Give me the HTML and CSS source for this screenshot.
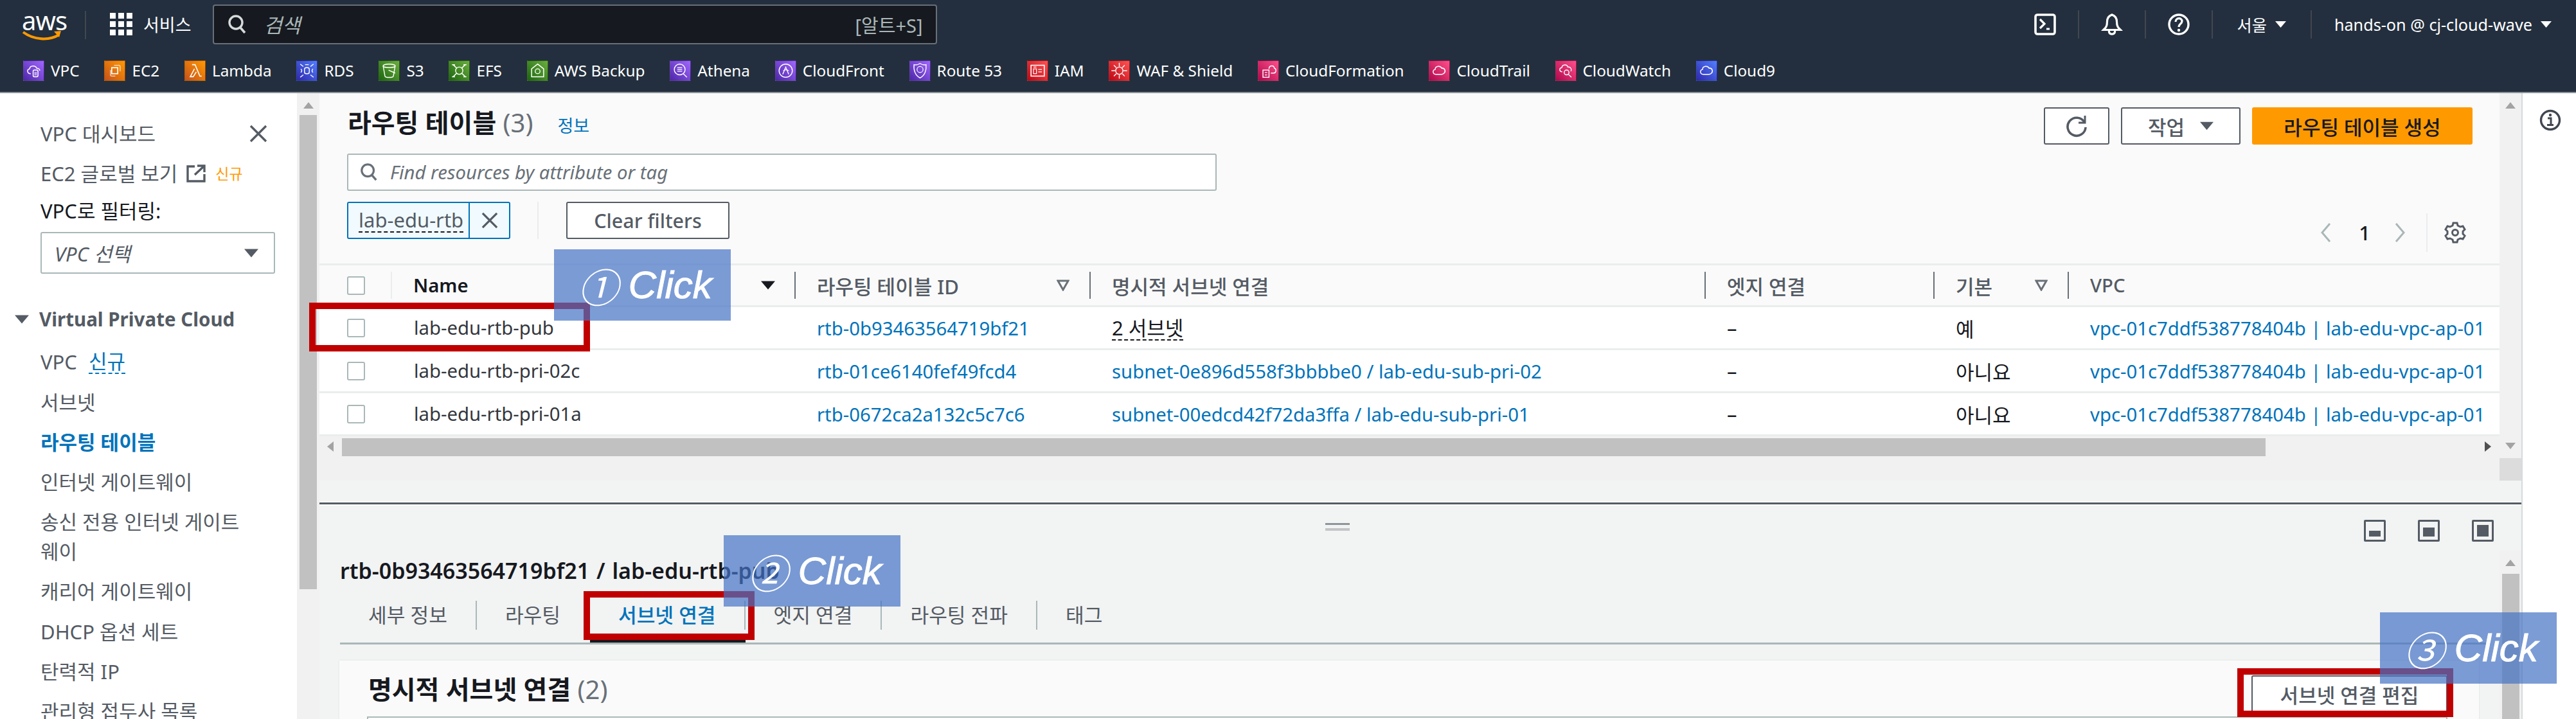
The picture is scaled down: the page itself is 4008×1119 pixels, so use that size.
FILE: index.html
```html
<!DOCTYPE html>
<html lang="ko">

<head>
    <meta charset="UTF-8">
    <title>라우팅 테이블 | VPC Management Console</title>
    <link rel="stylesheet" href="styles.css">
</head>

<body>
    <svg class="sprite" xmlns="http://www.w3.org/2000/svg">
        <symbol id="i-search" viewBox="0 0 32 32"><circle cx="14" cy="13" r="10" fill="none" stroke="currentColor" stroke-width="3.4"/><path d="M21 21l7 8" stroke="currentColor" stroke-width="3.6" fill="none"/></symbol>
        <symbol id="i-x" viewBox="0 0 28 28"><path d="M2 2l24 24M26 2L2 26" stroke="currentColor" stroke-width="3.4" fill="none"/></symbol>
        <symbol id="i-tri" viewBox="0 0 20 12"><path d="M0 0h20L10 12z" fill="currentColor"/></symbol>
        <symbol id="i-filter" viewBox="0 0 20 18"><path d="M2 2h16L10 16z" fill="none" stroke="currentColor" stroke-width="3"/></symbol>
        <symbol id="i-ext" viewBox="0 0 30 28"><path d="M13 3H2v23h26V15M17 2h11v10M28 2L13 16" fill="none" stroke="currentColor" stroke-width="3.4"/></symbol>
        <symbol id="i-shell" viewBox="0 0 34 34"><rect x="2" y="2" width="30" height="30" rx="3" fill="none" stroke="currentColor" stroke-width="3.6"/><path d="M9 9l7 7-7 7M19 24h5" fill="none" stroke="currentColor" stroke-width="3.2"/></symbol>
        <symbol id="i-bell" viewBox="0 0 36 36"><path d="M18 2c-6 2-8 6-8 12 0 7-2 9-6 13h28c-4-4-6-6-6-13 0-6-2-10-8-12zM13 28c0 4 2 6 5 6s5-2 5-6" fill="none" stroke="currentColor" stroke-width="3.4"/></symbol>
        <symbol id="i-help" viewBox="0 0 34 34"><circle cx="17" cy="17" r="15" fill="none" stroke="currentColor" stroke-width="3.4"/><path d="M12 13c0-7 10-7 10-1 0 4-5 4-5 9" fill="none" stroke="currentColor" stroke-width="3.2"/><circle cx="17" cy="26" r="2.2" fill="currentColor"/></symbol>
        <symbol id="i-info" viewBox="0 0 34 34"><circle cx="17" cy="17" r="14.5" fill="none" stroke="currentColor" stroke-width="3.4"/><path d="M13 14h5v10M12 24.5h10" fill="none" stroke="currentColor" stroke-width="3"/><circle cx="17" cy="9" r="2.2" fill="currentColor"/></symbol>
        <symbol id="i-refresh" viewBox="0 0 36 36"><path d="M30 12A14 14 0 1 0 32 20" fill="none" stroke="currentColor" stroke-width="3.6"/><path d="M31 2v11H21" fill="none" stroke="currentColor" stroke-width="3"/></symbol>
        <symbol id="i-gear" viewBox="0 0 34 34"><path d="M14 2h6l1 4 4 2 4-1 3 5-3 3v4l3 3-3 5-4-1-4 2-1 4h-6l-1-4-4-2-4 1-3-5 3-3v-4L2 12l3-5 4 1 4-2z" fill="none" stroke="currentColor" stroke-width="3"/><circle cx="17" cy="17" r="4.5" fill="none" stroke="currentColor" stroke-width="3"/></symbol>
        <symbol id="i-left" viewBox="0 0 20 32"><path d="M16 2L4 16l12 14" fill="none" stroke="currentColor" stroke-width="3"/></symbol>
        <symbol id="i-right" viewBox="0 0 20 32"><path d="M4 2l12 14L4 30" fill="none" stroke="currentColor" stroke-width="3"/></symbol>
        <symbol id="f-cloud" viewBox="0 0 32 32"><path d="M10 22c-5 0-6-7-1-8 0-6 9-7 11-2 5-1 7 5 4 8-1 1-2 2-4 2z" fill="none" stroke="currentColor" stroke-width="1.6"/></symbol>
        <symbol id="f-vpc" viewBox="0 0 32 32"><path d="M11 21c-6 0-7-7-2-8 1-6 10-6 12-1 3 0 5 2 5 4" fill="none" stroke="currentColor" stroke-width="1.6"/><rect x="15" y="15" width="8" height="11" rx="2" fill="none" stroke="currentColor" stroke-width="1.6"/><path d="M18 18v6M20 18v6" stroke="currentColor" stroke-width="1"/></symbol>
        <symbol id="f-ec2" viewBox="0 0 32 32"><rect x="11" y="11" width="10" height="10" fill="none" stroke="currentColor" stroke-width="1.8"/><path d="M15 7h8a2 2 0 0 1 2 2v8M9 15v8a2 2 0 0 0 2 2h6" fill="none" stroke="currentColor" stroke-width="1.4" opacity=".75"/></symbol>
        <symbol id="f-lambda" viewBox="0 0 32 32"><path d="M11 6h5l8 19h3M15 13L8 26h5l5-8" fill="none" stroke="currentColor" stroke-width="1.7"/></symbol>
        <symbol id="f-rds" viewBox="0 0 32 32"><rect x="12" y="11" width="8" height="10" rx="3" fill="none" stroke="currentColor" stroke-width="1.5"/><path d="M5 5l5 4M27 5l-5 4M5 27l5-4M27 27l-5-4M6 13c2 2 2 4 0 6M26 13c-2 2-2 4 0 6M13 6h6" fill="none" stroke="currentColor" stroke-width="1.5"/></symbol>
        <symbol id="f-s3" viewBox="0 0 32 32"><ellipse cx="16" cy="8" rx="10" ry="3" fill="none" stroke="currentColor" stroke-width="1.5"/><path d="M6 8l3 17c1 3 13 3 14 0l3-17M15 15l11 5" fill="none" stroke="currentColor" stroke-width="1.5"/></symbol>
        <symbol id="f-efs" viewBox="0 0 32 32"><path d="M6 6l6 6M26 6l-6 6M6 26l6-6M26 26l-6-6M4 6h5M23 6h5M4 26h5M23 26h5" stroke="currentColor" stroke-width="1.6" fill="none"/><ellipse cx="16" cy="16" rx="6" ry="6" fill="none" stroke="currentColor" stroke-width="1.5"/></symbol>
        <symbol id="f-backup" viewBox="0 0 32 32"><path d="M16 5l10 8v13H6V13z" fill="none" stroke="currentColor" stroke-width="1.6"/><circle cx="16" cy="17" r="4" fill="none" stroke="currentColor" stroke-width="1.4"/></symbol>
        <symbol id="f-athena" viewBox="0 0 32 32"><circle cx="15" cy="14" r="9" fill="none" stroke="currentColor" stroke-width="1.5"/><path d="M21 21l6 6M11 11h8M11 14h8M11 17h8" stroke="currentColor" stroke-width="1.4" fill="none"/></symbol>
        <symbol id="f-front" viewBox="0 0 32 32"><circle cx="16" cy="16" r="11" fill="none" stroke="currentColor" stroke-width="1.5"/><path d="M11 22l5-12 5 12M12 16c3-2 6-2 9 0" fill="none" stroke="currentColor" stroke-width="1.4"/></symbol>
        <symbol id="f-route" viewBox="0 0 32 32"><path d="M16 4c3 2 7 3 10 2 1 9-2 18-10 22C8 24 5 15 6 6c3 1 7 0 10-2z" fill="none" stroke="currentColor" stroke-width="1.5"/><circle cx="16" cy="14" r="5" fill="none" stroke="currentColor" stroke-width="1.3"/></symbol>
        <symbol id="f-iam" viewBox="0 0 32 32"><rect x="5" y="7" width="22" height="18" fill="none" stroke="currentColor" stroke-width="1.7"/><rect x="9" y="13" width="5" height="8" fill="none" stroke="currentColor" stroke-width="1.3"/><path d="M17 14h6M17 18h6M9 10h5" stroke="currentColor" stroke-width="1.3"/></symbol>
        <symbol id="f-waf" viewBox="0 0 32 32"><circle cx="16" cy="16" r="6" fill="none" stroke="currentColor" stroke-width="1.5"/><path d="M16 3v6M16 23v6M3 16h6M23 16h6M7 7l4 4M25 7l-4 4M7 25l4-4M25 25l-4-4" stroke="currentColor" stroke-width="1.5"/></symbol>
        <symbol id="f-form" viewBox="0 0 32 32"><path d="M17 13c0-6 8-7 9-1 4 1 3 8-1 8h-5" fill="none" stroke="currentColor" stroke-width="1.5"/><rect x="7" y="15" width="10" height="12" fill="none" stroke="currentColor" stroke-width="1.5"/><path d="M10 19h4M10 23h4" stroke="currentColor" stroke-width="1.3"/></symbol>
        <symbol id="f-watch" viewBox="0 0 32 32"><path d="M10 18c-5 0-6-6-1-7 1-6 9-6 10-1 5-1 7 4 5 7" fill="none" stroke="currentColor" stroke-width="1.5"/><circle cx="17" cy="19" r="4" fill="none" stroke="currentColor" stroke-width="1.5"/><path d="M20 22l5 5" stroke="currentColor" stroke-width="1.5"/></symbol>
    </svg>

    <header class="top">
        <div class="nav">
            <div class="logo">
                <span class="logo-text">aws</span>
                <svg class="logo-smile" viewBox="0 0 64 18"><path d="M2 3c16 12 40 14 56 4" fill="none" stroke="#ff9900" stroke-width="4"/><path d="M50 2l11-1-3 10z" fill="#ff9900"/></svg>
            </div>
            <div class="services">
                <span class="grid-icon"><i></i><i></i><i></i><i></i><i></i><i></i><i></i><i></i><i></i></span>
                <span>서비스</span>
            </div>
            <div class="search">
                <svg class="search-icon"><use href="#i-search"/></svg>
                <span class="search-hint">검색</span>
                <span class="search-key">[알트+S]</span>
            </div>
            <div class="nav-right">
                <div class="nav-item"><svg class="nav-icon"><use href="#i-shell"/></svg></div>
                <div class="nav-item"><svg class="nav-icon"><use href="#i-bell"/></svg></div>
                <div class="nav-item"><svg class="nav-icon"><use href="#i-help"/></svg></div>
                <div class="nav-item nav-region">서울<svg class="nav-caret"><use href="#i-tri"/></svg></div>
                <div class="nav-item">hands-on @ cj-cloud-wave<svg class="nav-caret"><use href="#i-tri"/></svg></div>
            </div>
        </div>
        <div class="favs">
            <div class="fav"><span class="fav-icon purple"><svg><use href="#f-vpc"/></svg></span>VPC</div>
            <div class="fav"><span class="fav-icon orange"><svg><use href="#f-ec2"/></svg></span>EC2</div>
            <div class="fav"><span class="fav-icon orange"><svg><use href="#f-lambda"/></svg></span>Lambda</div>
            <div class="fav"><span class="fav-icon blue"><svg><use href="#f-rds"/></svg></span>RDS</div>
            <div class="fav"><span class="fav-icon green"><svg><use href="#f-s3"/></svg></span>S3</div>
            <div class="fav"><span class="fav-icon green"><svg><use href="#f-efs"/></svg></span>EFS</div>
            <div class="fav"><span class="fav-icon green"><svg><use href="#f-backup"/></svg></span>AWS Backup</div>
            <div class="fav"><span class="fav-icon purple"><svg><use href="#f-athena"/></svg></span>Athena</div>
            <div class="fav"><span class="fav-icon purple"><svg><use href="#f-front"/></svg></span>CloudFront</div>
            <div class="fav"><span class="fav-icon purple"><svg><use href="#f-route"/></svg></span>Route 53</div>
            <div class="fav"><span class="fav-icon red"><svg><use href="#f-iam"/></svg></span>IAM</div>
            <div class="fav"><span class="fav-icon red"><svg><use href="#f-waf"/></svg></span>WAF &amp; Shield</div>
            <div class="fav"><span class="fav-icon pink"><svg><use href="#f-form"/></svg></span>CloudFormation</div>
            <div class="fav"><span class="fav-icon pink"><svg><use href="#f-cloud"/></svg></span>CloudTrail</div>
            <div class="fav"><span class="fav-icon pink"><svg><use href="#f-watch"/></svg></span>CloudWatch</div>
            <div class="fav"><span class="fav-icon blue"><svg><use href="#f-cloud"/></svg></span>Cloud9</div>
        </div>
    </header>

    <div class="page">
        <aside class="side">
            <div class="side-body">
                <div class="side-row side-first">VPC 대시보드<svg class="side-close"><use href="#i-x"/></svg></div>
                <div class="side-row">EC2 글로벌 보기<svg class="side-ext"><use href="#i-ext"/></svg><span class="new-orange">신규</span></div>
                <div class="side-label">VPC로 필터링:</div>
                <div class="side-select"><span>VPC 선택</span><svg class="select-tri"><use href="#i-tri"/></svg></div>
                <div class="side-group"><svg class="group-tri"><use href="#i-tri"/></svg>Virtual Private Cloud</div>
                <div class="side-row">VPC<span class="new-blue">신규</span></div>
                <div class="side-row">서브넷</div>
                <div class="side-row active">라우팅 테이블</div>
                <div class="side-row">인터넷 게이트웨이</div>
                <div class="side-row">송신 전용 인터넷 게이트<br>웨이</div>
                <div class="side-row">캐리어 게이트웨이</div>
                <div class="side-row">DHCP 옵션 세트</div>
                <div class="side-row">탄력적 IP</div>
                <div class="side-row">관리형 접두사 목록</div>
            </div>
            <div class="side-scroll">
                <span class="arrow-up"></span>
                <div class="side-thumb"></div>
            </div>
        </aside>

        <main class="content">
            <section class="upper">
                <div class="upper-main">
                    <div class="list-head">
                        <div class="title-row">
                            <h1 class="list-title">라우팅 테이블 <span class="count">(3)</span><span class="info-link">정보</span></h1>
                            <div class="actions">
                                <button class="btn btn-icon"><svg><use href="#i-refresh"/></svg></button>
                                <button class="btn btn-menu">작업<svg class="btn-caret"><use href="#i-tri"/></svg></button>
                                <button class="btn btn-primary">라우팅 테이블 생성</button>
                            </div>
                        </div>
                        <div class="find">
                            <svg class="find-icon"><use href="#i-search"/></svg>
                            <span>Find resources by attribute or tag</span>
                        </div>
                        <div class="filter-row">
                            <div class="filter-left">
                                <div class="token"><span class="token-text"><span class="dotted">lab-edu-rtb</span></span><span class="token-x"><svg><use href="#i-x"/></svg></span></div>
                                <div class="filter-sep"></div>
                                <button class="btn btn-clear">Clear filters</button>
                            </div>
                            <div class="pager">
                                <svg class="pager-arrow"><use href="#i-left"/></svg>
                                <span class="pager-num">1</span>
                                <svg class="pager-arrow"><use href="#i-right"/></svg>
                                <span class="pager-gear"><svg><use href="#i-gear"/></svg></span>
                            </div>
                        </div>
                    </div>

                    <table class="rt-table">
                        <colgroup>
                            <col class="c-check"><col class="c-name"><col class="c-id"><col class="c-sub"><col class="c-edge"><col class="c-def"><col class="c-vpc">
                        </colgroup>
                        <tr>
                            <th><span class="check"></span></th>
                            <th><div class="th-in th-first"><span class="th-dark">Name</span><svg class="sort-tri"><use href="#i-tri"/></svg></div></th>
                            <th><div class="th-in"><span>라우팅 테이블 ID</span><svg class="filter-tri"><use href="#i-filter"/></svg></div></th>
                            <th><div class="th-in"><span>명시적 서브넷 연결</span></div></th>
                            <th><div class="th-in"><span>엣지 연결</span></div></th>
                            <th><div class="th-in"><span>기본</span><svg class="filter-tri"><use href="#i-filter"/></svg></div></th>
                            <th><div class="th-in"><span class="th-latin">VPC</span></div></th>
                        </tr>
                        <tr>
                            <td><span class="check"></span></td>
                            <td class="cell-name">lab-edu-rtb-pub</td>
                            <td><a>rtb-0b93463564719bf21</a></td>
                            <td><span class="dotted">2 서브넷</span></td>
                            <td>–</td>
                            <td>예</td>
                            <td><a>vpc-01c7ddf538778404b | lab-edu-vpc-ap-01</a></td>
                        </tr>
                        <tr>
                            <td><span class="check"></span></td>
                            <td class="cell-name">lab-edu-rtb-pri-02c</td>
                            <td><a>rtb-01ce6140fef49fcd4</a></td>
                            <td><a>subnet-0e896d558f3bbbbe0 / lab-edu-sub-pri-02</a></td>
                            <td>–</td>
                            <td>아니요</td>
                            <td><a>vpc-01c7ddf538778404b | lab-edu-vpc-ap-01</a></td>
                        </tr>
                        <tr>
                            <td><span class="check"></span></td>
                            <td class="cell-name">lab-edu-rtb-pri-01a</td>
                            <td><a>rtb-0672ca2a132c5c7c6</a></td>
                            <td><a>subnet-00edcd42f72da3ffa / lab-edu-sub-pri-01</a></td>
                            <td>–</td>
                            <td>아니요</td>
                            <td><a>vpc-01c7ddf538778404b | lab-edu-vpc-ap-01</a></td>
                        </tr>
                    </table>

                    <div class="hscroll">
                        <span class="arrow-left"></span>
                        <div class="hscroll-thumb"></div>
                        <span class="arrow-right"></span>
                    </div>
                </div>
                <div class="upper-scroll">
                    <div class="upper-track">
                        <span class="arrow-up"></span>
                        <span class="arrow-down"></span>
                    </div>
                    <div class="upper-corner"></div>
                </div>
            </section>

            <section class="split">
                <div class="split-line"></div>
                <div class="split-tools">
                    <div class="handle"><i></i><i></i></div>
                    <div class="panes">
                        <span class="pane pane-low"><i></i></span>
                        <span class="pane pane-mid"><i></i></span>
                        <span class="pane pane-full"><i></i></span>
                    </div>
                </div>
                <div class="split-body">
                    <div class="detail">
                        <h2 class="detail-title">rtb-0b93463564719bf21 / lab-edu-rtb-pub</h2>
                        <div class="tabs">
                            <div class="tab"><span>세부 정보</span></div>
                            <div class="tab"><span>라우팅</span></div>
                            <div class="tab tab-on"><span>서브넷 연결</span></div>
                            <div class="tab"><span>엣지 연결</span></div>
                            <div class="tab"><span>라우팅 전파</span></div>
                            <div class="tab tab-last"><span>태그</span></div>
                        </div>
                        <div class="card">
                            <div class="card-head">
                                <h3 class="card-title">명시적 서브넷 연결 <span class="count">(2)</span></h3>
                                <button class="btn btn-edit">서브넷 연결 편집</button>
                            </div>
                            <div class="card-input"></div>
                        </div>
                    </div>
                    <div class="detail-scroll">
                        <span class="arrow-up"></span>
                        <div class="detail-thumb"></div>
                    </div>
                </div>
            </section>
        </main>

        <aside class="tools">
            <svg class="tools-info"><use href="#i-info"/></svg>
        </aside>
    </div>

    <!-- annotations pasted over the screenshot -->
    <div class="red-box red-1"></div>
    <div class="red-box red-2"></div>
    <div class="red-box red-3"></div>
    <div class="click click-1"><span class="click-num">①</span> Click</div>
    <div class="click click-2"><span class="click-num">②</span> Click</div>
    <div class="click click-3"><span class="click-num">③</span> Click</div>
</body>

</html>
```

FILE: styles.css
```css
* {
    box-sizing: border-box;
}
html, body {
    width: 4008px;
    height: 1119px;
    margin: 0;
    overflow: hidden;
}
body {
    position: relative;
    font-family: "Noto Sans", "Noto Sans CJK KR", sans-serif;
    font-size: 31px;
    color: #16191f;
    background: #fff;
}
.sprite {
    display: none;
}
h1, h2, h3 {
    margin: 0;
}
button {
    font-family: inherit;
}

/* top bars */
.top {
    height: 145px;
    background: #232f3e;
    border-bottom: 2px solid #8d9499;
    color: #fff;
}
.nav {
    display: flex;
    align-items: center;
    height: 75px;
    font-size: 25.2px;
}
.logo {
    position: relative;
    width: 134px;
    height: 44px;
    margin-top: 2px;
    padding-left: 34px;
    border-right: 2px solid #414750;
}
.logo-text {
    display: block;
    font-size: 40px;
    line-height: 30px;
    letter-spacing: -1px;
}
.logo-smile {
    display: block;
    width: 64px;
    height: 18px;
    margin-left: 0;
}
.services {
    display: flex;
    align-items: center;
    gap: 17px;
    padding-left: 37px;
    font-size: 27px;
}
.grid-icon {
    display: grid;
    grid-template-columns: repeat(3, 9px);
    gap: 4px;
}
.grid-icon i {
    width: 9px;
    height: 9px;
    background: #fff;
}
.search {
    display: flex;
    align-items: center;
    width: 1127px;
    height: 62px;
    margin-left: 33px;
    padding: 0 20px 0 20px;
    background: #16191f;
    border: 2px solid #687078;
    border-radius: 4px;
    color: #aab7b8;
}
.search-icon {
    width: 32px;
    height: 32px;
    color: #d5dbdb;
}
.search-hint {
    margin-left: 26px;
    font-size: 31px;
    font-style: italic;
}
.search-key {
    margin-left: auto;
    font-size: 29px;
}
.nav-right {
    display: flex;
    align-items: center;
    margin-left: auto;
}
.nav-item {
    display: flex;
    align-items: center;
    height: 44px;
    padding: 0 34px;
    border-right: 2px solid #414750;
}
.nav-region {
    padding: 0 38px;
}
.nav-item:last-child {
    padding: 0 38px 0 35px;
    border-right: 0;
}
.nav-icon {
    width: 34px;
    height: 34px;
}
.nav-caret {
    width: 17px;
    height: 12px;
    margin-left: 13px;
}
.favs {
    display: flex;
    align-items: center;
    gap: 38.8px;
    height: 68px;
    padding: 1px 0 0 36px;
    font-size: 24.3px;
}
.fav {
    display: flex;
    align-items: center;
    gap: 10px;
}
.fav-icon {
    display: flex;
    width: 33px;
    height: 32px;
    border: 1px solid rgba(0, 0, 0, .25);
}
.fav-icon svg {
    width: 31px;
    height: 30px;
    color: #fff;
}
.purple { background: linear-gradient(45deg, #4d27a8, #a166ff); }
.orange { background: linear-gradient(45deg, #c8511b, #ff9900); }
.blue { background: linear-gradient(45deg, #2e27ad, #527fff); }
.green { background: linear-gradient(45deg, #1b660f, #6cae3e); }
.red { background: linear-gradient(45deg, #bd0816, #ff5252); }
.pink { background: linear-gradient(45deg, #b0084d, #ff4f8b); }

/* page columns */
.page {
    display: flex;
    height: 974px;
}

/* left nav */
.side {
    display: flex;
    flex: none;
    width: 497px;
    color: #545b64;
}
.side-body {
    width: 462px;
    padding: 40px 0 0 63px;
    overflow: hidden;
}
.side-row {
    display: flex;
    flex-wrap: wrap;
    align-items: center;
    width: 380px;
    padding: 8.1px 0;
    line-height: 46px;
    white-space: nowrap;
}
.side-first {
    position: relative;
    padding-top: 0;
}
.side-close {
    position: absolute;
    left: 325px;
    top: 9px;
    width: 28px;
    height: 28px;
}
.side-ext {
    width: 30px;
    height: 28px;
    margin-left: 14px;
}
.new-orange {
    margin-left: 15px;
    font-size: 23px;
    color: #ff9900;
}
.new-blue {
    margin-left: 18px;
    color: #0073bb;
    border-bottom: 2px dashed #0073bb;
    line-height: 36px;
}
.side-label {
    margin-top: 4px;
    color: #16191f;
    line-height: 46px;
}
.side-select {
    display: flex;
    align-items: center;
    justify-content: space-between;
    width: 365px;
    height: 65px;
    margin-top: 10px;
    padding: 0 24px 0 20px;
    background: #fff;
    border: 2px solid #aab7b8;
    border-radius: 3px;
    font-style: italic;
}
.select-tri {
    width: 22px;
    height: 14px;
}
.side-group {
    display: flex;
    align-items: center;
    margin: 48px 0 0 -40px;
    font-size: 29.5px;
    line-height: 46px;
    font-weight: 700;
    white-space: nowrap;
}
.group-tri {
    width: 22px;
    height: 14px;
    margin-right: 16px;
}
.side-group + .side-row {
    margin-top: 12px;
}
.active {
    font-weight: 700;
    color: #0073bb;
}
.side-scroll {
    position: relative;
    width: 35px;
    background: #f1f1f1;
}
.side-thumb {
    width: 27px;
    height: 738px;
    margin: 34px 0 0 4px;
    background: #c1c1c1;
}
.arrow-up, .arrow-down {
    display: block;
    position: absolute;
    left: 50%;
    width: 0;
    height: 0;
    margin-left: -8px;
    border-left: 8px solid transparent;
    border-right: 8px solid transparent;
}
.arrow-up {
    top: 14px;
    border-bottom: 10px solid #a3a3a3;
}
.arrow-down {
    bottom: 14px;
    border-top: 10px solid #a3a3a3;
}

/* main column */
.content {
    display: flex;
    flex-direction: column;
    width: 3426px;
    background: #f2f3f3;
    overflow: hidden;
}
.upper {
    display: flex;
    flex: none;
    height: 603px;
}
.upper-main {
    width: 3392px;
    background: #f1f1f1;
}
.list-head {
    height: 265px;
    padding: 22px 42px 0 44px;
    background: #fafafa;
}
.title-row {
    display: flex;
    justify-content: space-between;
    height: 58px;
}
.list-title {
    font-size: 40px;
    line-height: 48px;
    font-weight: 700;
}
.count {
    font-weight: 400;
    color: #687078;
}
.info-link {
    margin-left: 38px;
    font-size: 27px;
    font-weight: 400;
    color: #0073bb;
}
.actions {
    display: flex;
    gap: 18px;
}
.btn {
    height: 58px;
    background: #fff;
    border: 2px solid #545b64;
    border-radius: 3px;
    color: #545b64;
    font-size: 31px;
    font-weight: 500;
}
.btn-icon {
    width: 102px;
}
.btn-icon svg {
    display: block;
    width: 36px;
    height: 36px;
    margin: 0 auto;
}
.btn-menu {
    display: flex;
    align-items: center;
    justify-content: center;
    width: 186px;
}
.btn-caret {
    width: 21px;
    height: 28px;
    margin-left: 24px;
}
.btn-primary {
    width: 343px;
    background: #ff9900;
    border-color: #ff9900;
    color: #16191f;
}
.find {
    display: flex;
    align-items: center;
    gap: 18px;
    width: 1353px;
    height: 58px;
    margin: 14px 0 17px -1px;
    padding-left: 17px;
    background: #fff;
    border: 2px solid #aab7b8;
    border-radius: 3px;
    color: #687078;
    font-size: 29.3px;
    font-style: italic;
}
.find-icon {
    width: 30px;
    height: 32px;
}
.filter-row {
    display: flex;
    justify-content: space-between;
    height: 78px;
}
.filter-left {
    display: flex;
    margin-left: -1px;
}
.token {
    display: flex;
    height: 58px;
    background: #f1faff;
    border: 2px solid #0073bb;
    border-radius: 3px;
}
.token-text {
    display: flex;
    align-items: center;
    width: 189px;
    padding-left: 16px;
    border-right: 2px solid #0073bb;
}
.dotted {
    border-bottom: 2px dashed #16191f;
    line-height: 36px;
    display: inline-block;
}
.token-text .dotted {
    color: #545b64;
}
.token-x {
    display: flex;
    align-items: center;
    justify-content: center;
    width: 61px;
    color: #545b64;
}
.token-x svg {
    width: 26px;
    height: 28px;
}
.filter-sep {
    width: 2px;
    height: 58px;
    margin: 0 43px 0 42px;
    background: #eaeded;
}
.btn-clear {
    width: 254px;
    font-size: 30.5px;
    font-weight: 500;
}
.pager {
    display: flex;
    align-items: center;
    color: #aab7b8;
    align-self: flex-end;
    height: 60px;
}
.pager-arrow {
    width: 20px;
    height: 32px;
}
.pager-num {
    margin: 0 36px 0 41px;
    color: #16191f;
    font-weight: 500;
}
.pager-gear {
    display: flex;
    align-items: center;
    height: 60px;
    margin-left: 31px;
    padding: 0 10px 0 26px;
    border-left: 2px solid #eaeded;
    color: #545b64;
}
.pager-gear svg {
    width: 34px;
    height: 34px;
}

/* route table */
.rt-table {
    width: 3392px;
    table-layout: fixed;
    border-collapse: collapse;
    background: #fff;
}
.c-check { width: 111px; }
.c-name { width: 628px; }
.c-id { width: 459px; }
.c-sub { width: 957px; }
.c-edge { width: 356px; }
.c-def { width: 209px; }
.c-vpc { width: 672px; }
.rt-table th {
    height: 65px;
    padding: 0;
    background: #fafafa;
    border-top: 3px solid #eaeded;
    border-bottom: 3px solid #eaeded;
    text-align: left;
    font-weight: 500;
    color: #545b64;
}
.rt-table td {
    height: 67px;
    padding: 0 0 0 35px;
    border-bottom: 3px solid #eaeded;
    white-space: nowrap;
}
.rt-table td:first-child, .rt-table th:first-child {
    padding-left: 43px;
}
.rt-table a {
    color: #0073bb;
    font-size: 29.3px;
}
.rt-table .cell-name {
    padding-left: 36px;
    color: #33373d;
    font-size: 29.3px;
}
.check {
    display: block;
    width: 28px;
    height: 29px;
    background: #fff;
    border: 2px solid #aab7b8;
    border-radius: 3px;
}
.th-in {
    display: flex;
    align-items: center;
    justify-content: space-between;
    height: 42px;
    padding: 0 31px 0 33px;
    border-left: 2px solid #687078;
}
.th-first {
    border-left-color: #eaeded;
    padding-right: 30px;
}
.th-dark {
    color: #16191f;
    font-size: 29.3px;
    font-weight: 600;
}
.th-latin {
    font-size: 29.3px;
}
.sort-tri {
    width: 22px;
    height: 20px;
    color: #16191f;
}
.filter-tri {
    width: 20px;
    height: 18px;
    color: #687078;
}
.hscroll {
    position: relative;
    height: 34px;
    padding: 3px 0 3px 35px;
    background: #f1f1f1;
}
.hscroll-thumb {
    width: 2993px;
    height: 28px;
    background: #c1c1c1;
}
.arrow-left, .arrow-right {
    position: absolute;
    top: 8px;
    width: 0;
    height: 0;
    border-top: 8px solid transparent;
    border-bottom: 8px solid transparent;
}
.arrow-left {
    left: 12px;
    border-right: 10px solid #a3a3a3;
}
.arrow-right {
    right: 13px;
    border-left: 10px solid #505050;
}
.upper-scroll {
    display: flex;
    flex-direction: column;
    width: 34px;
}
.upper-track {
    position: relative;
    height: 568px;
    background: #f1f1f1;
}
.upper-corner {
    flex: 1;
    background: #dcdcdc;
}

/* bottom split panel */
.split {
    display: flex;
    flex-direction: column;
    flex: 1;
    min-height: 0;
}
.split-line {
    flex: none;
    height: 3px;
    margin-top: 34px;
    background: #545b64;
    box-shadow: 0 -2px 0 #fff, 0 2px 0 #fff;
}
.split-tools {
    display: flex;
    flex: none;
    height: 72px;
}
.handle {
    margin: 29px 0 0 1565px;
}
.handle i {
    display: block;
    width: 38px;
    height: 3px;
    margin-bottom: 5px;
    background: #8e9499;
}
.handle i + i {
    background: #c2c4c6;
    height: 4px;
}
.panes {
    display: flex;
    gap: 50px;
    margin: 24px 43px 0 auto;
}
.pane {
    display: flex;
    align-items: flex-end;
    width: 34px;
    height: 34px;
    padding: 5px;
    background: #f2f3f3;
    border: 3px solid #545b64;
    border-radius: 2px;
}
.pane i {
    display: block;
    width: 100%;
    background: #545b64;
}
.pane-low i { height: 9px; }
.pane-mid i { height: 14px; }
.pane-full i { height: 100%; }
.split-body {
    display: flex;
    flex: 1;
    min-height: 0;
}
.detail {
    width: 3392px;
    padding: 10px 0 0 32px;
    overflow: hidden;
}
.detail-title {
    font-size: 34px;
    line-height: 42px;
    font-weight: 600;
    word-spacing: 2px;
    white-space: nowrap;
}
.tabs {
    display: flex;
    height: 68px;
    margin: 26px 14px 0 0;
    border-bottom: 3px solid #aab7b8;
    color: #545b64;
    font-size: 31.2px;
}
.tab {
    height: 65px;
    border-bottom: 4px solid transparent;
}
.tab span {
    display: block;
    height: 45px;
    line-height: 44px;
    padding: 0 44px;
    border-right: 2px solid #aab7b8;
}
.tab-last span {
    border-right: 0;
}
.tab-on {
    border-bottom-color: #16191f;
    color: #0073bb;
    font-weight: 500;
}
.card {
    width: 3329px;
    height: 200px;
    margin: 25px 0 0 -1px;
    padding: 23px 49px 0 45px;
    background: #fafafa;
    box-shadow: 0 0 2px #d5dbdb;
}
.card-head {
    display: flex;
    justify-content: space-between;
}
.card-title {
    font-size: 40px;
    line-height: 44px;
    font-weight: 700;
}
.btn-edit {
    width: 305px;
}
.card-input {
    height: 40px;
    margin: 6px 0 0 -2px;
    background: #fff;
    border: 2px solid #aab7b8;
}
.detail-scroll {
    position: relative;
    width: 34px;
    background: #f1f1f1;
}
.detail-thumb {
    width: 27px;
    height: 300px;
    margin: 36px 0 0 4px;
    background: #c1c1c1;
}

/* right tools strip */
.tools {
    flex: none;
    width: 85px;
    padding: 25px 0 0 26px;
    background: #fff;
    border-left: 2px solid #d5dbdb;
    color: #414750;
}
.tools-info {
    width: 34px;
    height: 34px;
}

/* annotations */
.red-box {
    position: absolute;
    border: 10px solid #c00000;
}
.red-1 {
    left: 481px;
    top: 471px;
    width: 437px;
    height: 76px;
}
.red-2 {
    left: 908px;
    top: 920px;
    width: 266px;
    height: 76px;
}
.red-3 {
    left: 3481px;
    top: 1040px;
    width: 336px;
    height: 76px;
}
.click {
    position: absolute;
    display: flex;
    align-items: center;
    justify-content: center;
    width: 275px;
    height: 111px;
    padding-left: 8px;
    background: rgba(68, 114, 196, .7);
    color: #fff;
    font-family: "Liberation Sans", sans-serif;
    font-size: 60px;
    font-style: italic;
    -webkit-text-stroke: 1px #fff;
    white-space: pre;
}
.click-num {
    font-family: "Noto Sans CJK KR", sans-serif;
    font-size: 62px;
    -webkit-text-stroke: 0;
}
.click-1 {
    left: 862px;
    top: 388px;
}
.click-2 {
    left: 1126px;
    top: 833px;
}
.click-3 {
    left: 3703px;
    top: 953px;
}
```
